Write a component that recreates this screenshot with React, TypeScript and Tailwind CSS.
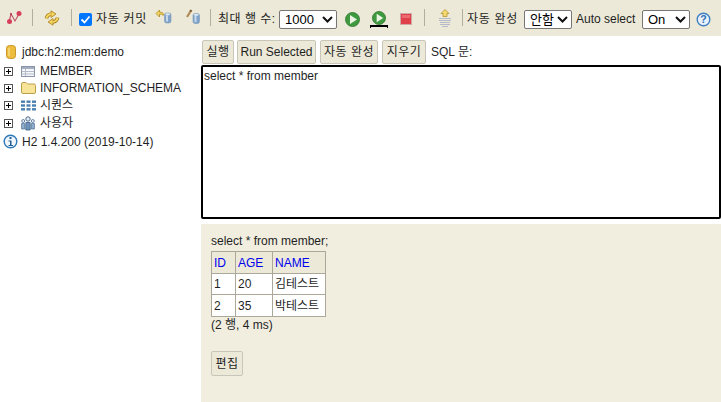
import type { ReactNode } from "react";

function Sep() {
  return <div className="w-px h-[17px] -mt-[3px] bg-[#b0ae9f] shrink-0" />;
}

function IconDisconnect() {
  return (
    <svg width="16" height="16" viewBox="0 0 16 16" className="shrink-0">
      <path d="M3 13 L5 5 L9 12 L13 5" fill="none" stroke="#c05068" strokeWidth="1.1" />
      <circle cx="3.5" cy="12.5" r="2.5" fill="#d8405a" />
      <circle cx="13" cy="4.5" r="2.5" fill="#d8405a" />
      <circle cx="5" cy="5" r="0.9" fill="#b03048" />
    </svg>
  );
}

function IconRefresh() {
  const arc = "M2.5 8.5 Q3 4.5 7.5 4";
  const head = "M7 0.8 L12 4 L7 7.5 Z";
  return (
    <svg width="16" height="16" viewBox="0 0 16 16" className="shrink-0 -mt-[3px]">
      <g>
        <path d={arc} fill="none" stroke="#a8821c" strokeWidth="3.6" />
        <path d={head} fill="#f4d460" stroke="#a8821c" strokeWidth="0.8" />
        <path d={arc} fill="none" stroke="#f4d460" strokeWidth="2" />
      </g>
      <g transform="rotate(180 8 8)">
        <path d={arc} fill="none" stroke="#a8821c" strokeWidth="3.6" />
        <path d={head} fill="#f4d460" stroke="#a8821c" strokeWidth="0.8" />
        <path d={arc} fill="none" stroke="#f4d460" strokeWidth="2" />
      </g>
    </svg>
  );
}

function Cylinder({ x, y }: { x: number; y: number }) {
  return (
    <g>
      <rect x={x} y={y} width="6.5" height="10" rx="2" fill="#7fa3c8" stroke="#7a98b8" strokeWidth="0.6" />
      <rect x={x + 1.5} y={y + 2.5} width="2" height="6" fill="#c6d8ea" />
      <ellipse cx={x + 3.2} cy={y + 1.3} rx="2.5" ry="1.1" fill="#dce8f2" />
    </g>
  );
}

function IconCommit() {
  return (
    <svg width="17" height="16" viewBox="0 0 17 16" className="shrink-0 -mt-[4px]">
      <path d="M1 4.5 L4.5 1 L4.5 3 Q8 2.5 9 6 L7.5 6 Q6.5 5 4.5 5.2 L4.5 8 Z" fill="#f4d460" stroke="#a8821c" strokeWidth="0.7" />
      <Cylinder x={9.5} y={4} />
    </svg>
  );
}

function IconRollback() {
  return (
    <svg width="17" height="16" viewBox="0 0 17 16" className="shrink-0 -mt-[4px]">
      <path d="M2 8 L6 1.5" stroke="#b08a58" strokeWidth="2.2" />
      <path d="M5.4 2.5 L6.4 1" stroke="#7a5a30" strokeWidth="2.2" />
      <Cylinder x={8} y={4.5} />
    </svg>
  );
}

function IconPlay({ size }: { size: number }) {
  return (
    <svg width={size} height={size} viewBox="0 0 15 15" className="shrink-0">
      <circle cx="7.5" cy="7.5" r="7" fill="#3f9a3f" stroke="#2c742c" strokeWidth="0.8" />
      <path d="M5 3 L12 7.5 L5 12 Z" fill="#eef4e4" />
    </svg>
  );
}

function IconStop() {
  return (
    <svg width="12" height="12" viewBox="0 0 12 12" className="shrink-0 -mt-[1px]">
      <rect x="0.5" y="0.5" width="11" height="11" fill="#e0404a" stroke="#d0a8a8" strokeWidth="1" />
      <rect x="2" y="2" width="8" height="3" fill="#ea6a70" />
    </svg>
  );
}

function IconHistory() {
  return (
    <svg width="12" height="18" viewBox="0 0 12 18" className="shrink-0 -mt-[3px]">
      <path d="M6 0.5 L10 4.5 L8 4.5 L8 7.5 L4 7.5 L4 4.5 L2 4.5 Z" fill="#f4d870" stroke="#b08a20" strokeWidth="0.7" />
      <path d="M0 9.5 H12 M0 11.5 H12 M1 13.5 H11 M1 15.5 H11 M3 17.5 H9" stroke="#b4bac8" strokeWidth="1" />
    </svg>
  );
}

function IconHelp() {
  return (
    <svg width="15" height="15" viewBox="0 0 15 15" className="shrink-0">
      <circle cx="7.5" cy="7.5" r="6.3" fill="#e8f0fa" stroke="#3f7fc0" strokeWidth="1.4" />
      <text x="7.5" y="11.3" textAnchor="middle" fontSize="10.5" fontWeight="700" fill="#2f6fb5" fontFamily="Liberation Sans">?</text>
    </svg>
  );
}

function Select({ value, className }: { value: string; className: string }) {
  return (
    <div className={`h-[19px] flex items-center justify-between bg-white border border-[#767676] rounded-[2px] pl-[5px] pr-[3px] text-[13px] leading-none text-black shrink-0 ${className}`}>
      <span>{value}</span>
      <svg width="11" height="7" viewBox="0 0 11 7">
        <path d="M1 1 L5.5 5.5 L10 1" fill="none" stroke="#111" strokeWidth="2" />
      </svg>
    </div>
  );
}

function Toolbar() {
  return (
    <div className="h-[36px] bg-[#ece9d8] flex items-center pl-[6px] pt-[2px] text-[12px] text-[#1f1f1f] shrink-0">
      <div className="-mt-[4px]"><IconDisconnect /></div>
      <div className="ml-[10px]"><Sep /></div>
      <div className="ml-[11px]"><IconRefresh /></div>
      <div className="ml-[11px]"><Sep /></div>
      <div className="ml-[7px] w-[13px] h-[13px] rounded-[2px] bg-[#0075ff] flex items-center justify-center shrink-0">
        <svg width="11" height="11" viewBox="0 0 11 11">
          <path d="M1.5 5.5 L4.5 8.5 L9.5 2.5" fill="none" stroke="#fff" strokeWidth="1.8" />
        </svg>
      </div>
      <span className="ml-[4px] w-[51px] shrink-0 whitespace-nowrap tracking-[0.7px]">자동 커밋</span>
      <div className="ml-[8px]"><IconCommit /></div>
      <div className="ml-[13px]"><IconRollback /></div>
      <div className="ml-[8px]"><Sep /></div>
      <span className="ml-[7px] w-[57px] shrink-0 whitespace-nowrap tracking-[0.5px]">최대 행 수:</span>
      <Select value="1000" className="ml-[4px] w-[58px]" />
      <div className="ml-[8px]"><IconPlay size={15} /></div>
      <div className="ml-[10px] flex flex-col items-center w-[18px] shrink-0">
        <IconPlay size={14} />
        <div className="w-[18px] h-[3px] border-t-2 border-x border-black" />
      </div>
      <div className="ml-[12px]"><IconStop /></div>
      <div className="ml-[12px]"><Sep /></div>
      <div className="ml-[14px]"><IconHistory /></div>
      <div className="ml-[11px]"><Sep /></div>
      <span className="ml-[4px] w-[52px] shrink-0 whitespace-nowrap tracking-[0.7px]">자동 완성</span>
      <Select value="안함" className="ml-[5px] w-[48px]" />
      <span className="ml-[4px] w-[60px] shrink-0 whitespace-nowrap">Auto select</span>
      <Select value="On" className="ml-[6px] w-[48px]" />
      <div className="ml-[6px]"><IconHelp /></div>
    </div>
  );
}

function Plus() {
  return (
    <div className="w-[9px] h-[9px] border border-[#555] bg-white relative shrink-0">
      <div className="absolute left-[1px] top-[3px] w-[5px] h-px bg-black" />
      <div className="absolute left-[3px] top-[1px] w-px h-[5px] bg-black" />
    </div>
  );
}

function TableIcon() {
  return (
    <svg width="14" height="11" viewBox="0 0 14 11">
      <rect x="0.5" y="0.5" width="13" height="10" fill="#f4f6fa" stroke="#8a94a8" />
      <rect x="1" y="1" width="12" height="2" fill="#a4aec0" />
      <path d="M1 5.5 H13 M1 8 H13 M4.5 3 V10" stroke="#b4bccc" />
    </svg>
  );
}

function FolderIcon() {
  return (
    <svg width="15" height="12" viewBox="0 0 15 12">
      <path d="M0.5 2 Q0.5 0.5 2 0.5 H5 L6.5 2 H13 Q14.5 2 14.5 3.5 V10 Q14.5 11.5 13 11.5 H2 Q0.5 11.5 0.5 10 Z" fill="#f8e498" stroke="#bda04a" />
    </svg>
  );
}

function SequenceIcon() {
  return (
    <svg width="15" height="11" viewBox="0 0 15 11" fill="#4a7fb0">
      {[0.5, 4.3, 8.1].map((y) =>
        [0, 5.5, 11].map((x) => <rect key={`${x}-${y}`} x={x} y={y} width="4" height="2.4" />),
      )}
    </svg>
  );
}

function UsersIcon() {
  return (
    <svg width="14" height="15" viewBox="0 0 14 15">
      <circle cx="7" cy="3" r="2.2" fill="#e8eef5" stroke="#4a6a90" />
      <path d="M4.8 6.5 H9.2 V14 H4.8 Z" fill="#6f94bc" stroke="#3f5f85" strokeWidth="0.8" />
      <circle cx="2.2" cy="5" r="1.5" fill="#e8eef5" stroke="#4a6a90" strokeWidth="0.8" />
      <path d="M0.6 7.5 H3.6 V13 H0.6 Z" fill="#8fb0d0" stroke="#4a6a90" strokeWidth="0.7" />
      <circle cx="11.8" cy="5" r="1.5" fill="#e8eef5" stroke="#4a6a90" strokeWidth="0.8" />
      <path d="M10.4 7.5 H13.4 V13 H10.4 Z" fill="#8fb0d0" stroke="#4a6a90" strokeWidth="0.7" />
    </svg>
  );
}

function TreeRow({ icon, label, className }: { icon: ReactNode; label: string; className: string }) {
  return (
    <div className={`flex items-center ${className}`}>
      <div className="ml-[4px]"><Plus /></div>
      <div className="ml-[7px] w-[16px] flex justify-center">{icon}</div>
      <span className="ml-[4px]">{label}</span>
    </div>
  );
}

function Sidebar() {
  return (
    <div className="w-[201px] shrink-0 pt-[7px] text-[12px] text-[#1f1f1f]">
      <div className="h-[18px] flex items-center">
        <svg width="10" height="14" viewBox="0 0 10 14" className="ml-[6px]">
          <rect x="0.5" y="0.5" width="9" height="13" rx="3" fill="#eebd3e" stroke="#c9962a" />
          <path d="M3 3 V11" stroke="#f6dc88" strokeWidth="1.4" />
        </svg>
        <span className="ml-[6px]">jdbc:h2:mem:demo</span>
      </div>
      <TreeRow className="h-[19px] pt-[1px]" icon={<TableIcon />} label="MEMBER" />
      <TreeRow className="h-[16px]" icon={<FolderIcon />} label="INFORMATION_SCHEMA" />
      <TreeRow className="h-[18px]" icon={<SequenceIcon />} label="시퀀스" />
      <TreeRow className="h-[18px]" icon={<UsersIcon />} label="사용자" />
      <div className="h-[19px] flex items-center">
        <svg width="15" height="15" viewBox="0 0 15 15" className="ml-[3px]">
          <circle cx="7.5" cy="7.5" r="6.3" fill="#f0f6fc" stroke="#2f78b8" strokeWidth="1.4" />
          <rect x="6.5" y="3" width="2" height="2" fill="#1f5f98" />
          <path d="M5.5 6.5 H8.5 V11 H10 V12 H5.5 V11 H7 V7.5 H5.5 Z" fill="#1f5f98" />
        </svg>
        <span className="ml-[4px]">H2 1.4.200 (2019-10-14)</span>
      </div>
    </div>
  );
}

function Btn({ children, className = "" }: { children: ReactNode; className?: string }) {
  return (
    <div className={`flex items-center justify-center bg-[#ece9d8] border border-[#c8c6b8] rounded-[2px] text-[12px] text-[#1f1f1f] shrink-0 ${className}`}>
      {children}
    </div>
  );
}

function Results() {
  const th = "border border-[#aca899] bg-[#ece9d8] text-[#0000ee] px-[2px] text-left font-normal";
  const td = "border border-[#aca899] bg-white px-[2px]";
  return (
    <div className="flex-1 mt-[5px] bg-[#f1eee0] pl-[10px] pt-[10px] text-[12px] text-[#1f1f1f]">
      <div className="h-[15px] leading-[15px]">select * from member;</div>
      <table className="border-collapse mt-[2px]">
        <thead>
          <tr className="h-[22px]">
            <th className={`${th} w-[24px]`}>ID</th>
            <th className={`${th} w-[37px]`}>AGE</th>
            <th className={`${th} w-[53px]`}>NAME</th>
          </tr>
        </thead>
        <tbody>
          <tr className="h-[21px]">
            <td className={td}>1</td>
            <td className={td}>20</td>
            <td className={td}>김테스트</td>
          </tr>
          <tr className="h-[22px]">
            <td className={`${td} pt-[1px]`}>2</td>
            <td className={`${td} pt-[1px]`}>35</td>
            <td className={`${td} pt-[1px]`}>박테스트</td>
          </tr>
        </tbody>
      </table>
      <div className="h-[15px] leading-[15px] mt-[1px]">(2 행, 4 ms)</div>
      <Btn className="mt-[18px] w-[32px] h-[25px] tracking-[0.5px]">편집</Btn>
    </div>
  );
}

export default function App() {
  return (
    <div className="w-[721px] h-[402px] bg-white flex flex-col overflow-hidden font-['Liberation_Sans','Noto_Sans_CJK_KR',sans-serif]">
      <Toolbar />
      <div className="flex flex-1 min-h-0">
        <Sidebar />
        <div className="flex-1 flex flex-col min-w-0">
          <div className="h-[29px] flex items-start pt-[4px] text-[12px] text-[#1f1f1f]">
            <Btn className="ml-[1px] w-[32px] h-[24px] tracking-[0.5px]">실행</Btn>
            <Btn className="ml-[3px] w-[79px] h-[24px]">Run Selected</Btn>
            <Btn className="ml-[4px] w-[58px] h-[24px] tracking-[0.5px]">자동 완성</Btn>
            <Btn className="ml-[4px] w-[44px] h-[24px] tracking-[0.5px]">지우기</Btn>
            <span className="ml-[5px] mt-[3px]">SQL 문:</span>
          </div>
          <div className="h-[154px] border-2 border-black rounded-[2px] bg-white pl-[1px] pt-[2px] text-[12px] leading-[15px] text-[#1f1f1f]">
            select * from member
          </div>
          <Results />
        </div>
      </div>
    </div>
  );
}
